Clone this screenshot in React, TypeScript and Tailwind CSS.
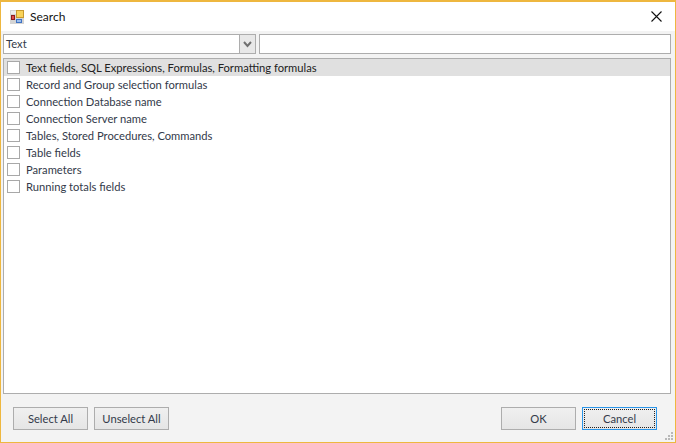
import React from 'react';

const options = [
  'Text fields, SQL Expressions, Formulas, Formatting formulas',
  'Record and Group selection formulas',
  'Connection Database name',
  'Connection Server name',
  'Tables, Stored Procedures, Commands',
  'Table fields',
  'Parameters',
  'Running totals fields',
];

const AppIcon = () => (
  <svg width="14" height="14" viewBox="0 0 14 14" shapeRendering="crispEdges">
    <rect x="0" y="0" width="14" height="14" fill="#d4d4d4" />
    <rect x="1" y="1" width="5" height="3" fill="#ececec" />
    <rect x="6" y="0" width="8" height="8" fill="#c8992e" />
    <rect x="7" y="1" width="6" height="6" fill="#f9d35a" />
    <rect x="1" y="5" width="4" height="5" fill="#8c1c1c" />
    <rect x="2" y="6" width="2" height="3" fill="#e04a4a" />
    <rect x="6" y="9" width="6" height="4" fill="#3f73c4" />
    <rect x="7" y="10" width="4" height="2" fill="#9cbdec" />
  </svg>
);

const Button = ({ label, focused }: { label: string; focused?: boolean }) => (
  <button
    type="button"
    className={
      'flex h-[23px] w-[75px] items-center justify-center border bg-gradient-to-b from-[#f0f0f0] to-[#e5e5e5] text-[11.2px] text-[#333a4a] ' +
      (focused ? 'border-[#2b95e8] p-px' : 'border-[#adadad] pt-[2px]')
    }
  >
    {focused ? (
      <span className="flex h-full w-full items-center justify-center border border-dotted border-[#222] pt-[2px]">{label}</span>
    ) : (
      label
    )}
  </button>
);

export default function App() {
  return (
    <div className="relative flex h-[443px] w-[676px] flex-col border border-t-2 border-[#eeb73f] bg-[#f3f3f3] font-['Lato',sans-serif] text-[11.2px] text-[#333a4a]">
      <div className="flex h-[29px] shrink-0 items-center justify-between bg-white pr-[13px] pl-[9px]">
        <div className="flex items-center gap-[6px]">
          <AppIcon />
          <span className="text-[12px] text-[#111]">Search</span>
        </div>
        <svg width="11" height="11" viewBox="0 0 11 11" fill="none" stroke="#111" strokeWidth="1.1">
          <path d="M0.5 0.5L10.5 10.5M10.5 0.5L0.5 10.5" />
        </svg>
      </div>

      <div className="flex min-h-0 flex-1 flex-col pt-[3px] pr-[4px] pl-[2px]">
        <div className="flex h-[20px] shrink-0 gap-[3px]">
          <div className="flex w-[253px] border border-[#adadad] bg-white">
            <span className="flex-1 pl-[2px] leading-[18px]">Text</span>
            <div className="flex w-[16px] items-center justify-center border-l border-[#adadad] bg-[#e8e8e8]">
              <svg width="9" height="7" viewBox="0 0 9 7" fill="none" stroke="#707070" strokeWidth="2">
                <path d="M1 1L4.5 5L8 1" />
              </svg>
            </div>
          </div>
          <div className="flex-1 border border-[#adadad] bg-white" />
        </div>

        <div className="mt-[4px] flex min-h-0 flex-1 flex-col border border-[#adadad] bg-white">
          {options.map((o, i) => (
            <div key={o} className={'flex h-[17px] items-center pl-[3px] ' + (i === 0 ? 'bg-[#e0e0e0] text-[#222]' : '')}>
              <span className="h-[13px] w-[13px] shrink-0 border border-[#a8a8a8] bg-white" />
              <span className="ml-[6px] whitespace-nowrap pt-[2px]">{o}</span>
            </div>
          ))}
        </div>

        <div className="flex h-[48px] shrink-0 items-start justify-between pt-[13px] pr-[14px] pl-[10px]">
          <div className="flex gap-[6px]">
            <Button label="Select All" />
            <Button label="Unselect All" />
          </div>
          <div className="flex gap-[6px]">
            <Button label="OK" />
            <Button label="Cancel" focused />
          </div>
        </div>
      </div>

      <svg className="absolute right-0 bottom-0" width="11" height="11" viewBox="0 0 11 11" fill="#b8b8b8" shapeRendering="crispEdges">
        <rect x="7" y="1" width="2" height="2" />
        <rect x="4" y="4" width="2" height="2" />
        <rect x="7" y="4" width="2" height="2" />
        <rect x="1" y="7" width="2" height="2" />
        <rect x="4" y="7" width="2" height="2" />
        <rect x="7" y="7" width="2" height="2" />
      </svg>
    </div>
  );
}
